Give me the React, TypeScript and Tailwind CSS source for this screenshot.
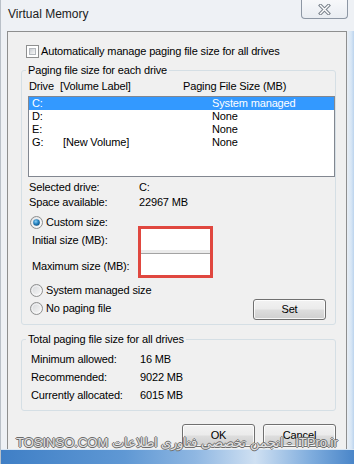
import React from "react";

const drives = [
  { drive: "C:", label: "", size: "System managed", selected: true },
  { drive: "D:", label: "", size: "None" },
  { drive: "E:", label: "", size: "None" },
  { drive: "G:", label: "[New Volume]", size: "None" },
];

const totals = [
  { label: "Minimum allowed:", value: "16 MB" },
  { label: "Recommended:", value: "9022 MB" },
  { label: "Currently allocated:", value: "6015 MB" },
];

function Checkbox() {
  return (
    <span className="flex h-[13px] w-[13px] shrink-0 border border-[#8e8f8f] bg-white p-[2px]">
      <span className="flex-1 border border-[#b4b8bd] bg-[linear-gradient(135deg,#c9ccd1_0%,#e4e6e8_55%,#f7f7f7_100%)]" />
    </span>
  );
}

function Radio({ checked = false }: { checked?: boolean }) {
  return (
    <svg width="13" height="13" viewBox="0 0 13 13" className="shrink-0">
      <defs>
        <linearGradient id="rbg" x1="0" y1="0" x2="1" y2="1">
          <stop offset="0" stopColor="#d3d5d8" />
          <stop offset="1" stopColor="#fbfbfb" />
        </linearGradient>
        <radialGradient id="rdot" cx="0.4" cy="0.35" r="0.7">
          <stop offset="0" stopColor="#8fd0f4" />
          <stop offset="0.5" stopColor="#2a87c4" />
          <stop offset="1" stopColor="#0d4f80" />
        </radialGradient>
      </defs>
      <circle cx="6.5" cy="6.5" r="6" fill="url(#rbg)" stroke="#8e8f8f" strokeWidth="1" />
      <circle cx="6.5" cy="6.5" r="4.5" fill="none" stroke="#ffffff" strokeWidth="0.8" opacity="0.7" />
      {checked ? <circle cx="6.5" cy="6.5" r="3.3" fill="url(#rdot)" /> : null}
    </svg>
  );
}

function WinButton({ children, className = "" }: { children: React.ReactNode; className?: string }) {
  return (
    <div
      className={`flex items-center justify-center rounded-[3px] border border-[#707070] bg-[linear-gradient(180deg,#f2f2f2_0%,#ebebeb_48%,#dddddd_52%,#cfcfcf_100%)] text-[11px] text-black shadow-[inset_0_0_0_1px_rgba(255,255,255,0.8)] ${className}`}
    >
      {children}
    </div>
  );
}

export default function App() {
  return (
    <div className="relative flex h-[464px] w-[354px] flex-col overflow-hidden border-l border-[#b9c0c8] bg-[#eef1f5] font-['Liberation_Sans',Arial,sans-serif] text-[11px] tracking-[-0.15px] text-black">
      {/* title bar */}
      <div className="flex h-[31px] shrink-0 items-start justify-between">
        <span className="mt-[6px] ml-[7px] text-[12px] leading-[16px] tracking-normal text-[#1b1b1b]">Virtual Memory</span>
        <div className="mr-[6px] flex h-[19px] w-[47px] items-center justify-center rounded-b-[4px] border-x border-b border-[#8d97a4] bg-[linear-gradient(180deg,#f7f8fa_0%,#e9edf2_100%)]">
          <svg width="13" height="11" viewBox="0 0 13 11">
            <path d="M2.5 1.5 L10.5 9.5 M10.5 1.5 L2.5 9.5" stroke="#7a828c" strokeWidth="3.4" strokeLinecap="square" />
            <path d="M2.5 1.5 L10.5 9.5 M10.5 1.5 L2.5 9.5" stroke="#ffffff" strokeWidth="1.4" strokeLinecap="square" />
          </svg>
        </div>
      </div>

      <div className="flex flex-1 overflow-hidden">
        {/* dialog body */}
        <div className="ml-[6px] w-[340px] shrink-0 border-x border-t border-[#8e8f8f] bg-[#f0f0f0]">
          <div className="mt-[13px] flex h-[13px] items-center gap-[2px] pl-[18px] leading-[13px]">
            <Checkbox />
            <span>Automatically manage paging file size for all drives</span>
          </div>

          <fieldset className="mt-[4px] ml-[13px] w-[315px] rounded-[3px] border border-[#d5dfe5] px-0 pb-[4px]">
            <legend className="ml-[4px] px-[2px] leading-[16px]">Paging file size for each drive</legend>
            <div className="flex h-[16px] items-center pl-[7px]">
              <span className="w-[31px]">Drive</span>
              <span className="w-[123px]">[Volume Label]</span>
              <span>Paging File Size (MB)</span>
            </div>
            <div className="mt-[2px] ml-[6px] h-[81px] w-[307px] border border-[#828790] bg-white">
              {drives.map((d) => (
                <div
                  key={d.drive}
                  className={`flex h-[13px] items-center pl-[3px] leading-[13px] ${d.selected ? "bg-[#3399ff] text-white" : ""}`}
                >
                  <span className="w-[31px]">{d.drive}</span>
                  <span className="w-[149px]">{d.label}</span>
                  <span>{d.size}</span>
                </div>
              ))}
            </div>

            <div className="mt-[3px] pl-[7px]">
              <div className="flex h-[15px] items-center">
                <span className="w-[110px]">Selected drive:</span>
                <span>C:</span>
              </div>
              <div className="flex h-[15px] items-center">
                <span className="w-[110px]">Space available:</span>
                <span>22967 MB</span>
              </div>
            </div>

            <div className="mt-[6px] flex h-[12px] items-center gap-[3px] pl-[8px]">
              <Radio checked />
              <span>Custom size:</span>
            </div>

            <div className="-mt-[2px] flex">
              <div className="flex w-[116px] flex-col pt-[6px] pl-[10px]">
                <span className="flex h-[16px] items-center">Initial size (MB):</span>
                <span className="mt-[10px] flex h-[16px] items-center">Maximum size (MB):</span>
              </div>
              <div className="flex h-[52px] w-[75px] flex-col border-[3px] border-[#e0473f]">
                <div className="h-[21px] bg-white" />
                <div className="h-[3px] bg-[#ebebeb]" />
                <div className="h-[1px] bg-[#a3a3a3]" />
                <div className="flex-1 bg-white" />
              </div>
            </div>

            <div className="mt-[4px] flex items-start justify-between">
              <div className="flex flex-col pl-[8px]">
                <div className="flex h-[16px] items-center gap-[3px]">
                  <Radio />
                  <span>System managed size</span>
                </div>
                <div className="mt-[2px] flex h-[16px] items-center gap-[3px]">
                  <Radio />
                  <span>No paging file</span>
                </div>
              </div>
              <WinButton className="mt-[17px] mr-[9px] h-[21px] w-[73px]">Set</WinButton>
            </div>
          </fieldset>

          <fieldset className="mt-[6px] ml-[13px] w-[315px] rounded-[3px] border border-[#d5dfe5] px-0 pb-[6px]">
            <legend className="ml-[4px] px-[2px] leading-[16px]">Total paging file size for all drives</legend>
            <div className="pt-[3px] pl-[9px]">
              {totals.map((t) => (
                <div key={t.label} className="flex h-[18px] items-center">
                  <span className="w-[109px]">{t.label}</span>
                  <span>{t.value}</span>
                </div>
              ))}
            </div>
          </fieldset>

          <div className="mt-[13px] flex justify-end gap-[8px] pr-[10px]">
            <WinButton className="h-[23px] w-[73px]">OK</WinButton>
            <WinButton className="h-[23px] w-[73px]">Cancel</WinButton>
          </div>
        </div>
        <div className="w-[7px] shrink-0 bg-[linear-gradient(90deg,#e9eef4_0%,#d7e6f5_60%,#bcd4ee_100%)]" />
      </div>

      {/* taskbar strip under the window */}
      <div className="h-[15px] shrink-0 border-t border-[#d8e6f4] bg-[linear-gradient(90deg,#3f7fc6_0%,#5f98d4_35%,#8fb7e2_55%,#cfe0f2_72%,#7eacdd_88%,#4a86c9_100%)]" />

      {/* watermark over the bottom edge */}
      <div className="pointer-events-none absolute top-[434px] left-[15px] font-['Liberation_Sans','Noto_Sans',sans-serif] text-[13px] leading-[18px] tracking-normal whitespace-nowrap text-white/80 [text-shadow:1px_0_0_#6b6b6b,-1px_0_0_#6b6b6b,0_1px_0_#6b6b6b,0_-1px_0_#6b6b6b]">
        <span dir="rtl">ITPro.ir - انجمن تخصصی فناوری اطلاعات TOSINSO.COM</span>
      </div>
    </div>
  );
}
